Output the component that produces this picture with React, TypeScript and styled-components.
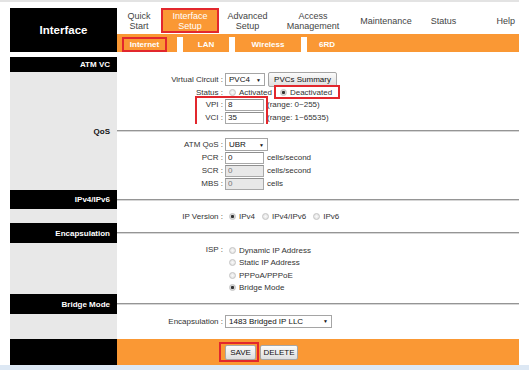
import React from 'react';
import styled, { createGlobalStyle } from 'styled-components';

const ORANGE = '#fa9834';
const RED = '#e2272d';
const SIDE_GRAY = '#e8e8e8';

const GlobalStyle = createGlobalStyle`
  html, body {
    margin: 0;
    padding: 0;
    background: #fff;
  }
  body {
    font-family: 'Liberation Sans', Arial, sans-serif;
    font-size: 8px;
    color: #333;
  }
`;

const Screen = styled.div`
  width: 529px;
  height: 370px;
  overflow: hidden;
  display: flex;
  flex-direction: column;
`;

const Frame = styled.div`
  width: 519px;
`;

const TopStrip = styled.div`
  height: 2px;
  background: #e3e3e3;
`;

const Page = styled.div`
  margin-left: 10px;
  width: 509px;
`;

const Header = styled.header`
  display: grid;
  grid-template-columns: 107px 1fr;
  height: 44px;
  margin: 6px 0 5px;
`;

const Brand = styled.div`
  background: #000;
  color: #fff;
  font-weight: bold;
  font-size: 11.5px;
  display: flex;
  align-items: center;
  justify-content: center;
`;

const NavArea = styled.div`
  display: flex;
  flex-direction: column;
`;

const NavRow = styled.nav`
  display: grid;
  grid-template-columns: 44px 58px 57px 74px 72px 43px 1fr;
  height: 26px;
`;

const NavItem = styled.div<{ $active?: boolean; $end?: boolean }>`
  box-sizing: border-box;
  display: flex;
  align-items: center;
  justify-content: ${(p) => (p.$end ? 'flex-end' : 'center')};
  padding-right: ${(p) => (p.$end ? '4px' : '0')};
  text-align: center;
  font-size: 9px;
  line-height: 10px;
  color: ${(p) => (p.$active ? '#fff' : '#444')};
  background: ${(p) => (p.$active ? ORANGE : 'transparent')};
  border: ${(p) => (p.$active ? `2px solid ${RED}` : 'none')};
  height: ${(p) => (p.$active ? '25px' : 'auto')};
`;

const SubBar = styled.div`
  height: 18px;
  box-sizing: border-box;
  padding-top: 3px;
  background: ${ORANGE};
  display: flex;
`;

const SubCell = styled.div<{ $w: number }>`
  width: ${(p) => p.$w}px;
  height: 15px;
  display: flex;
  align-items: center;
  justify-content: center;
`;

const SubLabel = styled.span<{ $active?: boolean }>`
  box-sizing: border-box;
  color: #fff;
  font-weight: bold;
  font-size: 8px;
  display: flex;
  align-items: center;
  justify-content: center;
  height: 15px;
  width: ${(p) => (p.$active ? '45px' : 'auto')};
  margin-right: ${(p) => (p.$active ? '5px' : '0')};
  border: ${(p) => (p.$active ? `2px solid ${RED}` : 'none')};
`;

const SubSep = styled.div`
  width: 6px;
  height: 15px;
  background: #fff;
`;

const Row = styled.div<{ $h: number }>`
  display: grid;
  grid-template-columns: 107px 1fr;
  height: ${(p) => p.$h}px;
`;

const Side = styled.div<{ $tone: 'black' | 'gray' }>`
  background: ${(p) => (p.$tone === 'black' ? '#000' : SIDE_GRAY)};
  color: ${(p) => (p.$tone === 'black' ? '#fff' : '#111')};
  font-weight: bold;
  font-size: 8px;
  display: flex;
  align-items: center;
  justify-content: flex-end;
  padding-right: 7px;
`;

const Main = styled.div<{ $orange?: boolean; $top?: boolean }>`
  position: relative;
  background: ${(p) => (p.$orange ? ORANGE : '#fff')};
  display: flex;
  flex-direction: column;
  justify-content: ${(p) => (p.$top ? 'flex-start' : 'center')};
`;

const Divider = styled.div`
  border-top: 1px solid #959595;
  border-bottom: 1px solid #d6d6d6;
`;

const Field = styled.div<{ $h?: number; $start?: boolean }>`
  display: grid;
  grid-template-columns: 106px 1fr;
  column-gap: 2px;
  height: ${(p) => p.$h ?? 13}px;
  align-items: ${(p) => (p.$start ? 'start' : 'center')};
`;

const Label = styled.span<{ $line?: number }>`
  text-align: right;
  white-space: nowrap;
  color: #333;
  line-height: ${(p) => (p.$line ? `${p.$line}px` : 'normal')};
`;

const Value = styled.div<{ $column?: boolean }>`
  display: flex;
  flex-direction: ${(p) => (p.$column ? 'column' : 'row')};
  align-items: ${(p) => (p.$column ? 'flex-start' : 'center')};
  gap: ${(p) => (p.$column ? '0' : '3px')};
  padding-top: ${(p) => (p.$column ? '1px' : '0')};
  white-space: nowrap;
`;

const TextBox = styled.input`
  box-sizing: border-box;
  width: 39px;
  height: 12px;
  margin: 0;
  padding: 0 2px;
  border: 1px solid #a8a8a8;
  border-top-color: #8f8f8f;
  font-family: inherit;
  font-size: 8px;
  color: #222;
  background: #fff;
  &:disabled {
    background: #e8e8e8;
    color: #777;
  }
`;

const SelectBox = styled.div<{ $w: number }>`
  box-sizing: border-box;
  width: ${(p) => p.$w}px;
  height: 13px;
  border: 1px solid #a5a5a5;
  background: #fff;
  display: flex;
  align-items: center;
  justify-content: space-between;
  padding: 0 3px;
  color: #111;
`;

const Caret = styled.span`
  font-size: 5px;
  color: #111;
`;

const Button = styled.button<{ $w: number }>`
  box-sizing: border-box;
  width: ${(p) => p.$w}px;
  height: 15px;
  margin: 0;
  padding: 0;
  border: 1px solid #a6a6a6;
  border-radius: 2px;
  background: linear-gradient(#fbfbfb, #dedede);
  font-family: inherit;
  font-size: 8px;
  color: #111;
`;

const Radio = styled.input.attrs({ type: 'radio' })`
  appearance: none;
  box-sizing: border-box;
  width: 7px;
  height: 7px;
  margin: 0 0 0 4px;
  border-radius: 50%;
  border: 1px solid #c4c4c4;
  background: radial-gradient(circle, #fafafa 0, #dcdcdc 100%);
  &:checked {
    background: radial-gradient(circle, #333 0, #333 1.3px, #d8d8d8 1.8px);
  }
`;

const Option = styled.label`
  display: inline-flex;
  align-items: center;
  gap: 3px;
  color: #333;
  height: 12.5px;
`;

const Marked = styled.span`
  box-sizing: border-box;
  display: inline-flex;
  align-items: center;
  height: 14px;
  border: 2px solid ${RED};
  padding: 0 6px 0 0;
  margin-left: -1px;
`;

const MarkedGroup = styled.div`
  position: relative;
`;

const MarkBox = styled.div`
  position: absolute;
  left: 78px;
  top: -2px;
  width: 73px;
  height: 31px;
  box-sizing: border-box;
  border: 2px solid ${RED};
  pointer-events: none;
`;

const Unit = styled.span`
  color: #333;
`;

const ButtonBar = styled.div`
  display: flex;
  align-items: center;
  gap: 1px;
  margin-left: -6px;
`;

const SaveMark = styled.span`
  box-sizing: border-box;
  display: inline-flex;
  align-items: center;
  height: 20px;
  border: 2px solid ${RED};
  padding: 0 1px 0 4px;
`;

const BottomStrip = styled.div`
  height: 5px;
  background: #dde8f4;
`;

const App = () => {
  return (
    <>
      <GlobalStyle />
      <Screen>
        <Frame>
          <TopStrip />
          <Page>
            <Header>
              <Brand>Interface</Brand>
              <NavArea>
                <NavRow>
                  <NavItem>Quick<br />Start</NavItem>
                  <NavItem $active>Interface<br />Setup</NavItem>
                  <NavItem>Advanced<br />Setup</NavItem>
                  <NavItem>Access<br />Management</NavItem>
                  <NavItem>Maintenance</NavItem>
                  <NavItem>Status</NavItem>
                  <NavItem $end>Help</NavItem>
                </NavRow>
                <SubBar>
                  <SubCell $w={60}>
                    <SubLabel $active>Internet</SubLabel>
                  </SubCell>
                  <SubSep />
                  <SubCell $w={46}>
                    <SubLabel>LAN</SubLabel>
                  </SubCell>
                  <SubSep />
                  <SubCell $w={66}>
                    <SubLabel>Wireless</SubLabel>
                  </SubCell>
                  <SubSep />
                  <SubCell $w={40}>
                    <SubLabel>6RD</SubLabel>
                  </SubCell>
                </SubBar>
              </NavArea>
            </Header>

            <Row $h={15}>
              <Side $tone="black">ATM VC</Side>
              <Main />
            </Row>

            <Row $h={52}>
              <Side $tone="gray" />
              <Main>
                <Field>
                  <Label>Virtual Circuit :</Label>
                  <Value>
                    <SelectBox $w={40}>PVC4 <Caret>▼</Caret></SelectBox>
                    <Button $w={69}>PVCs Summary</Button>
                  </Value>
                </Field>
                <Field>
                  <Label>Status :</Label>
                  <Value>
                    <Option>
                      <Radio name="status" />
                      Activated
                    </Option>
                    <Marked>
                      <Option>
                        <Radio name="status" defaultChecked />
                        Deactivated
                      </Option>
                    </Marked>
                  </Value>
                </Field>
                <MarkedGroup>
                  <Field>
                    <Label>VPI :</Label>
                    <Value>
                      <TextBox defaultValue="8" />
                      <Unit>(range: 0~255)</Unit>
                    </Value>
                  </Field>
                  <Field>
                    <Label>VCI :</Label>
                    <Value>
                      <TextBox defaultValue="35" />
                      <Unit>(range: 1~65535)</Unit>
                    </Value>
                  </Field>
                  <MarkBox />
                </MarkedGroup>
              </Main>
            </Row>

            <Row $h={14}>
              <Side $tone="gray">QoS</Side>
              <Main>
                <Divider />
              </Main>
            </Row>

            <Row $h={52}>
              <Side $tone="gray" />
              <Main>
                <Field>
                  <Label>ATM QoS :</Label>
                  <Value>
                    <SelectBox $w={43}>UBR <Caret>▼</Caret></SelectBox>
                  </Value>
                </Field>
                <Field>
                  <Label>PCR :</Label>
                  <Value>
                    <TextBox defaultValue="0" />
                    <Unit>cells/second</Unit>
                  </Value>
                </Field>
                <Field>
                  <Label>SCR :</Label>
                  <Value>
                    <TextBox defaultValue="0" disabled />
                    <Unit>cells/second</Unit>
                  </Value>
                </Field>
                <Field>
                  <Label>MBS :</Label>
                  <Value>
                    <TextBox defaultValue="0" disabled />
                    <Unit>cells</Unit>
                  </Value>
                </Field>
              </Main>
            </Row>

            <Row $h={19}>
              <Side $tone="black">IPv4/IPv6</Side>
              <Main>
                <Divider />
              </Main>
            </Row>

            <Row $h={14}>
              <Side $tone="gray" />
              <Main>
                <Field>
                  <Label>IP Version :</Label>
                  <Value>
                    <Option>
                      <Radio name="ipver" defaultChecked />
                      IPv4
                    </Option>
                    <Option>
                      <Radio name="ipver" />
                      IPv4/IPv6
                    </Option>
                    <Option>
                      <Radio name="ipver" />
                      IPv6
                    </Option>
                  </Value>
                </Field>
              </Main>
            </Row>

            <Row $h={20}>
              <Side $tone="black">Encapsulation</Side>
              <Main>
                <Divider />
              </Main>
            </Row>

            <Row $h={51}>
              <Side $tone="gray" />
              <Main>
                <Field $h={51} $start>
                  <Label $line={14}>ISP :</Label>
                  <Value $column>
                    <Option>
                      <Radio name="isp" />
                      Dynamic IP Address
                    </Option>
                    <Option>
                      <Radio name="isp" />
                      Static IP Address
                    </Option>
                    <Option>
                      <Radio name="isp" />
                      PPPoA/PPPoE
                    </Option>
                    <Option>
                      <Radio name="isp" defaultChecked />
                      Bridge Mode
                    </Option>
                  </Value>
                </Field>
              </Main>
            </Row>

            <Row $h={20}>
              <Side $tone="black">Bridge Mode</Side>
              <Main>
                <Divider />
              </Main>
            </Row>

            <Row $h={25}>
              <Side $tone="gray" />
              <Main $top>
                <Field $h={14}>
                  <Label>Encapsulation :</Label>
                  <Value>
                    <SelectBox $w={107}>1483 Bridged IP LLC <Caret>▼</Caret></SelectBox>
                  </Value>
                </Field>
              </Main>
            </Row>

            <Row $h={26}>
              <Side $tone="black" />
              <Main $orange>
                <Field $h={26}>
                  <span />
                  <ButtonBar>
                    <SaveMark>
                      <Button $w={31}>SAVE</Button>
                    </SaveMark>
                    <Button $w={38}>DELETE</Button>
                  </ButtonBar>
                </Field>
              </Main>
            </Row>
          </Page>
        </Frame>
        <BottomStrip />
      </Screen>
    </>
  );
};

export default App;
